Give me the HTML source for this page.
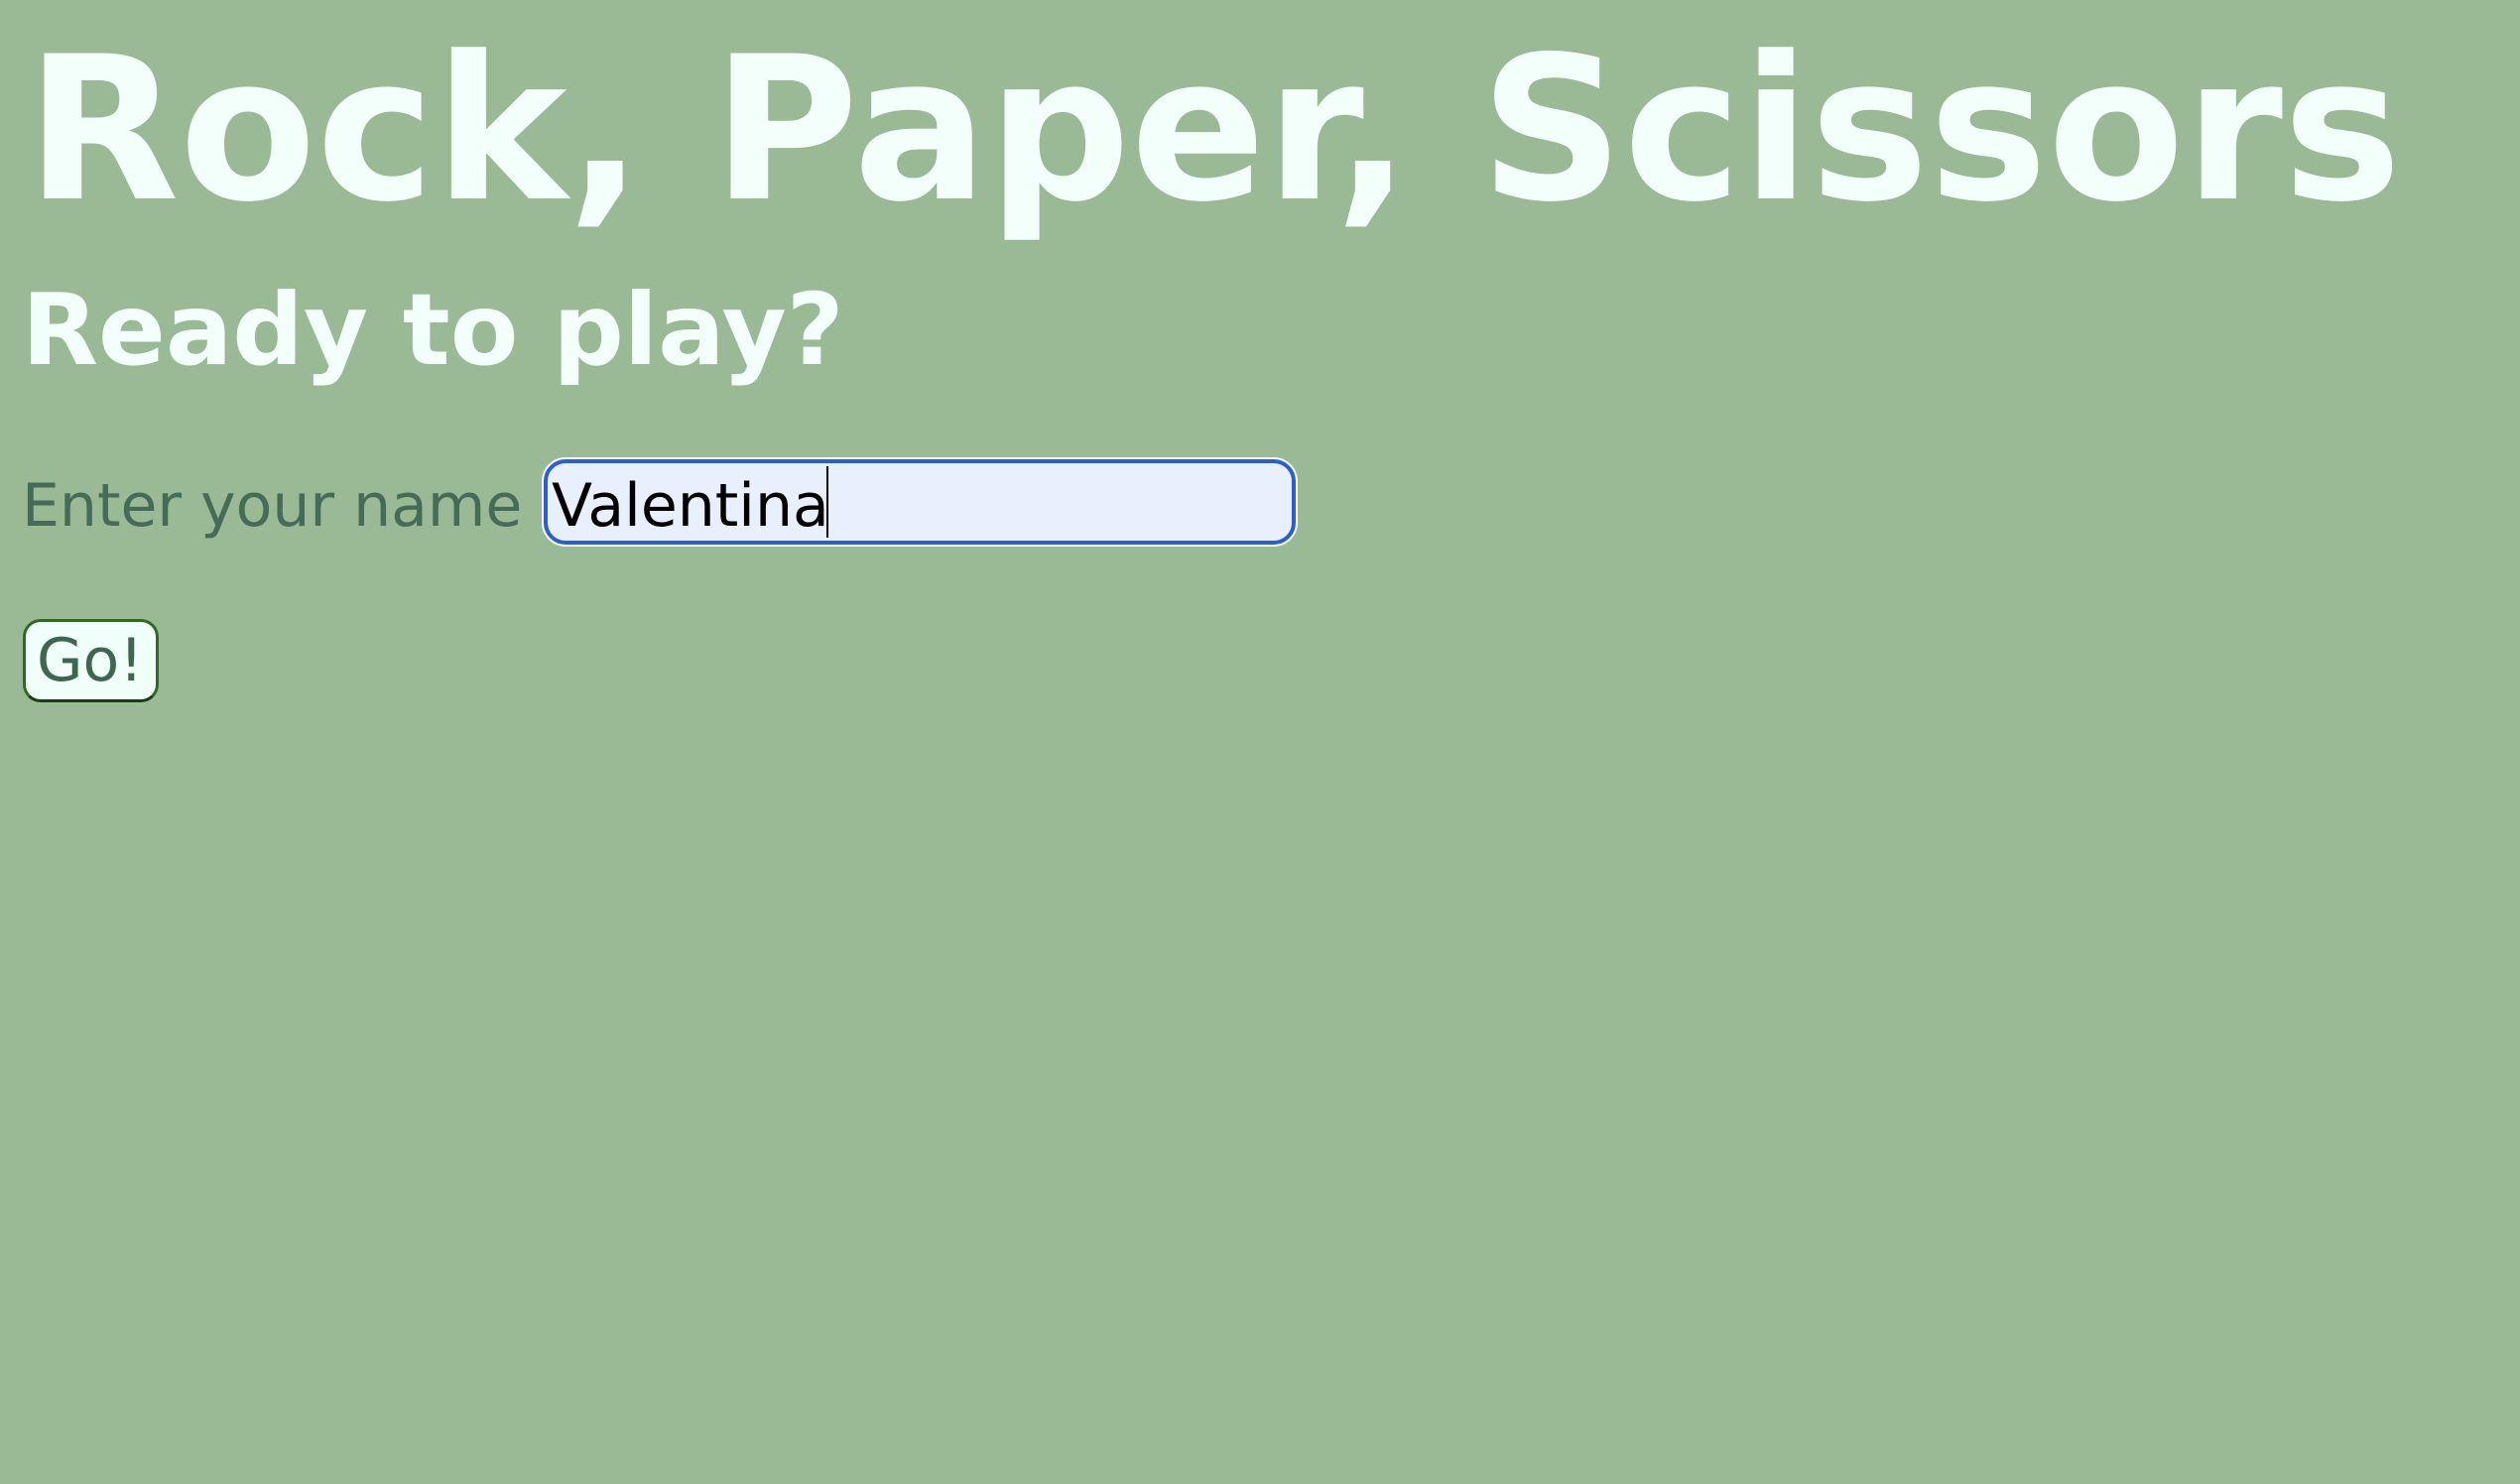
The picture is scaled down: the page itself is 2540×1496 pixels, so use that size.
<!DOCTYPE html>
<html><head><meta charset="utf-8"><style>
html,body{margin:0;padding:0;width:2540px;height:1496px;background:#9aba95;overflow:hidden;font-family:"DejaVu Sans",Verdana,sans-serif;}
.t{position:absolute;white-space:nowrap;line-height:1;}
h1{position:absolute;left:26px;top:31px;margin:0;font-size:201px;font-weight:bold;color:#f2fffb;line-height:1;white-space:nowrap;}
h2{position:absolute;left:22px;top:283px;margin:0;font-size:100px;font-weight:bold;color:#f2fffb;line-height:1;white-space:nowrap;}
.lab{left:22px;top:480px;font-size:60px;color:#466b57;}
.inp{position:absolute;left:548px;top:463px;width:758px;height:86px;box-sizing:border-box;border:4px solid #2a5fd0;border-radius:22px;background:#e8f0fe;box-shadow:0 0 0 2px #fff;}
.val{left:556px;top:480px;font-size:60px;color:#000;}
.cur{position:absolute;left:833px;top:470px;width:2px;height:72px;background:#000;}
.btn{position:absolute;left:23px;top:624px;width:137px;height:84px;box-sizing:border-box;border:3px solid #2f6a22;border-bottom-color:#1a3a12;border-radius:18px;background:#f0fffa;}
.go{left:37px;top:636px;font-size:60px;color:#3f6650;}
</style></head><body>
<h1>Rock, Paper, Scissors</h1>
<h2>Ready to play?</h2>
<div class="t lab">Enter your name</div>
<div class="inp"></div>
<div class="t val">Valentina</div>
<div class="cur"></div>
<div class="btn"></div>
<div class="t go">Go!</div>
</body></html>
